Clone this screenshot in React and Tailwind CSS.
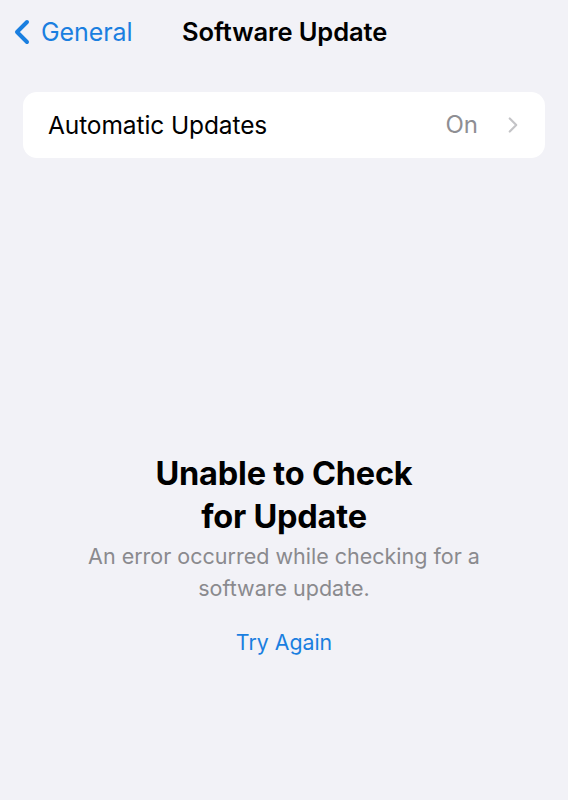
import { ChevronLeft, ChevronRight } from 'lucide-react';

const App = () => {
    return (
        <div
            className="min-h-screen w-full bg-[#f2f2f7] text-black"
            style={{ fontFamily: 'Inter, "Noto Sans", sans-serif' }}
        >
            {/* Navigation bar */}
            <div className="relative flex h-[64px] items-center">
                <div className="flex items-center pl-[2px] text-[#1a7fe0]">
                    <ChevronLeft size={40} strokeWidth={2.4} className="-mr-[1px]" />
                    <span className="text-[25px] leading-none tracking-[-0.1px]">General</span>
                </div>
                <div className="absolute left-[182px] top-0 flex h-full items-center">
                    <span className="text-[25.5px] font-semibold leading-none tracking-[-0.1px]">
                        Software Update
                    </span>
                </div>
            </div>

            {/* Settings group */}
            <div className="mx-[23px] mt-[28px] flex h-[66px] items-center rounded-[14px] bg-white pl-[25px] pr-[19px]">
                <span className="flex-1 text-[24.5px] tracking-[-0.1px]">Automatic Updates</span>
                <span className="text-[24px] text-[#8e8e93]">On</span>
                <ChevronRight size={26} strokeWidth={2} className="ml-[22px] text-[#c4c4c7]" />
            </div>

            {/* Error state */}
            <div className="mt-[294px] flex flex-col items-center text-center">
                <h1 className="text-[32.5px] font-bold leading-[43px] tracking-[-0.2px]">
                    Unable to Check
                    <br />
                    for Update
                </h1>
                <p className="mt-[2px] text-[21.5px] leading-[32px] text-[#8a8a8e]">
                    An error occurred while checking for a
                    <br />
                    software update.
                </p>
                <button className="mt-[23px] text-[21.3px] text-[#1a7fe0]">Try Again</button>
            </div>
        </div>
    );
};

export default App;
